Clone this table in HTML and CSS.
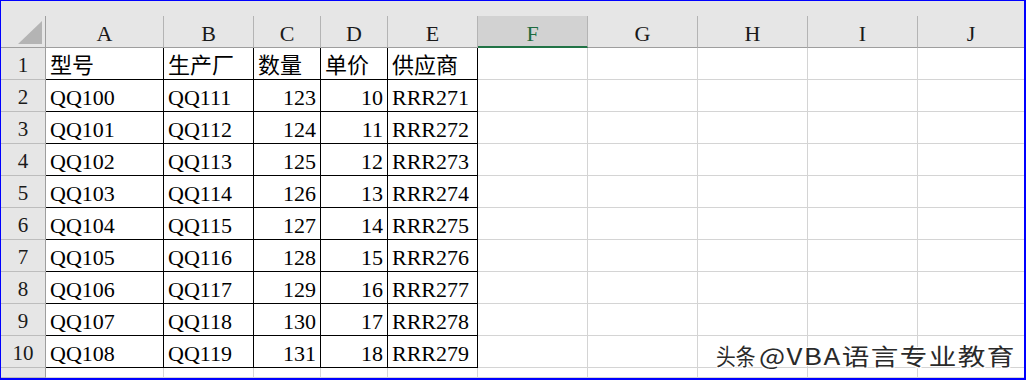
FILE: index.html
```html
<!DOCTYPE html>
<html lang="zh-CN">
<head>
<meta charset="utf-8">
<title>Sheet</title>
<link rel="stylesheet" href="styles.css">
</head>
<body>
<div class="frame">
  <div class="strip"></div>
  <div class="sheet">
    <div class="corner"><svg width="24" height="23" viewBox="0 0 24 23"><polygon points="0,23 24,23 24,0" fill="#b4b4b4"/></svg></div>
    <div class="hd">A</div><div class="hd">B</div><div class="hd">C</div><div class="hd">D</div><div class="hd">E</div><div class="hd sel">F</div><div class="hd">G</div><div class="hd">H</div><div class="hd">I</div><div class="hd last">J</div>

    <div class="rh">1</div><div class="d">型号</div><div class="d">生产厂</div><div class="d">数量</div><div class="d">单价</div><div class="d">供应商</div><div class="c"></div><div class="c"></div><div class="c"></div><div class="c"></div><div class="c last"></div>
    <div class="rh">2</div><div class="d">QQ100</div><div class="d">QQ111</div><div class="d n">123</div><div class="d n">10</div><div class="d">RRR271</div><div class="c"></div><div class="c"></div><div class="c"></div><div class="c"></div><div class="c last"></div>
    <div class="rh">3</div><div class="d">QQ101</div><div class="d">QQ112</div><div class="d n">124</div><div class="d n">11</div><div class="d">RRR272</div><div class="c"></div><div class="c"></div><div class="c"></div><div class="c"></div><div class="c last"></div>
    <div class="rh">4</div><div class="d">QQ102</div><div class="d">QQ113</div><div class="d n">125</div><div class="d n">12</div><div class="d">RRR273</div><div class="c"></div><div class="c"></div><div class="c"></div><div class="c"></div><div class="c last"></div>
    <div class="rh">5</div><div class="d">QQ103</div><div class="d">QQ114</div><div class="d n">126</div><div class="d n">13</div><div class="d">RRR274</div><div class="c"></div><div class="c"></div><div class="c"></div><div class="c"></div><div class="c last"></div>
    <div class="rh">6</div><div class="d">QQ104</div><div class="d">QQ115</div><div class="d n">127</div><div class="d n">14</div><div class="d">RRR275</div><div class="c"></div><div class="c"></div><div class="c"></div><div class="c"></div><div class="c last"></div>
    <div class="rh">7</div><div class="d">QQ105</div><div class="d">QQ116</div><div class="d n">128</div><div class="d n">15</div><div class="d">RRR276</div><div class="c"></div><div class="c"></div><div class="c"></div><div class="c"></div><div class="c last"></div>
    <div class="rh">8</div><div class="d">QQ106</div><div class="d">QQ117</div><div class="d n">129</div><div class="d n">16</div><div class="d">RRR277</div><div class="c"></div><div class="c"></div><div class="c"></div><div class="c"></div><div class="c last"></div>
    <div class="rh">9</div><div class="d">QQ107</div><div class="d">QQ118</div><div class="d n">130</div><div class="d n">17</div><div class="d">RRR278</div><div class="c"></div><div class="c"></div><div class="c"></div><div class="c"></div><div class="c last"></div>
    <div class="rh">10</div><div class="d">QQ108</div><div class="d">QQ119</div><div class="d n">131</div><div class="d n">18</div><div class="d">RRR279</div><div class="c"></div><div class="c"></div><div class="c"></div><div class="c"></div><div class="c last"></div>
    <div class="rh">11</div><div class="c"></div><div class="c"></div><div class="c"></div><div class="c"></div><div class="c"></div><div class="c"></div><div class="c"></div><div class="c"></div><div class="c"></div><div class="c last"></div>
  </div>
  <div class="wm"><span class="tt">头条</span><span class="rest">@VBA语言专业教育</span></div>
</div>
</body>
</html>
```
FILE: styles.css
```css
html, body {
  margin: 0;
  padding: 0;
  background: #ffffff;
}
body {
  width: 1026px;
  height: 380px;
  overflow: hidden;
  font-family: "Liberation Serif", "Noto Sans CJK SC", serif;
}
.frame {
  position: relative;
  box-sizing: border-box;
  width: 1026px;
  height: 380px;
  border-style: solid;
  border-color: #0000ff;
  border-width: 1px 2px 2px 1px;
  overflow: hidden;
  display: flex;
  flex-direction: column;
}
.strip {
  height: 15px;
  flex: none;
  background: #e6e6e6;
}
.sheet {
  flex: 1;
  display: grid;
  grid-template-columns: 45px 118px 90px 67px 67px 90px 110px 110px 110px 110px 106px;
  grid-template-rows: 32px repeat(10, 32px) 1fr;
  overflow: hidden;
}
.sheet > div {
  box-sizing: border-box;
  overflow: hidden;
  white-space: nowrap;
  font-size: 22px;
  line-height: 35px;
  color: #000;
}
.corner {
  background: #e6e6e6;
  border-right: 1px solid #9e9e9e;
  border-bottom: 1px solid #9e9e9e;
  display: flex;
  align-items: flex-end;
  justify-content: flex-end;
  padding: 0 3px 3px 0;
}
.corner svg { display: block; }
.hd {
  background: #e6e6e6;
  border-right: 1px solid #b4b4b4;
  border-bottom: 1px solid #9e9e9e;
  text-align: center;
  line-height: 36px !important;
  color: #1a1a1a !important;
}
.hd.last { border-right: none; }
.hd.sel {
  background: #d2d2d2;
  border-bottom: 2px solid #217346;
  color: #1e6b3f !important;
}
.rh {
  background: #e6e6e6;
  border-right: 1px solid #9e9e9e;
  border-bottom: 1px solid #bdbdbd;
  text-align: center;
  font-size: 21px !important;
  color: #1a1a1a !important;
}
.c {
  border-right: 1px solid #d4d4d4;
  border-bottom: 1px solid #d4d4d4;
}
.c.last { border-right: none; }
.d {
  border-right: 1px solid #000;
  border-bottom: 1px solid #000;
  padding: 0 4px;
}
.n { text-align: right; }

.wm {
  position: absolute;
  left: 715px;
  top: 341px;
  display: flex;
  align-items: baseline;
  font-family: "Noto Sans CJK SC", "Noto Sans", sans-serif;
  font-size: 23px;
  line-height: 26px;
  color: #2a2a2a;
  text-shadow: 0 0 1px #fff, 1px 1px 0 #fff, -1px -1px 0 #fff, 1px -1px 0 #fff, -1px 1px 0 #fff;
  white-space: nowrap;
}
.tt {
  display: inline-block;
  transform: scaleX(0.86);
  transform-origin: left center;
  margin-right: -3px;
}
.rest {
  display: inline-block;
  transform: scaleX(1.2);
  transform-origin: left center;
  letter-spacing: 1.2px;
}
```
